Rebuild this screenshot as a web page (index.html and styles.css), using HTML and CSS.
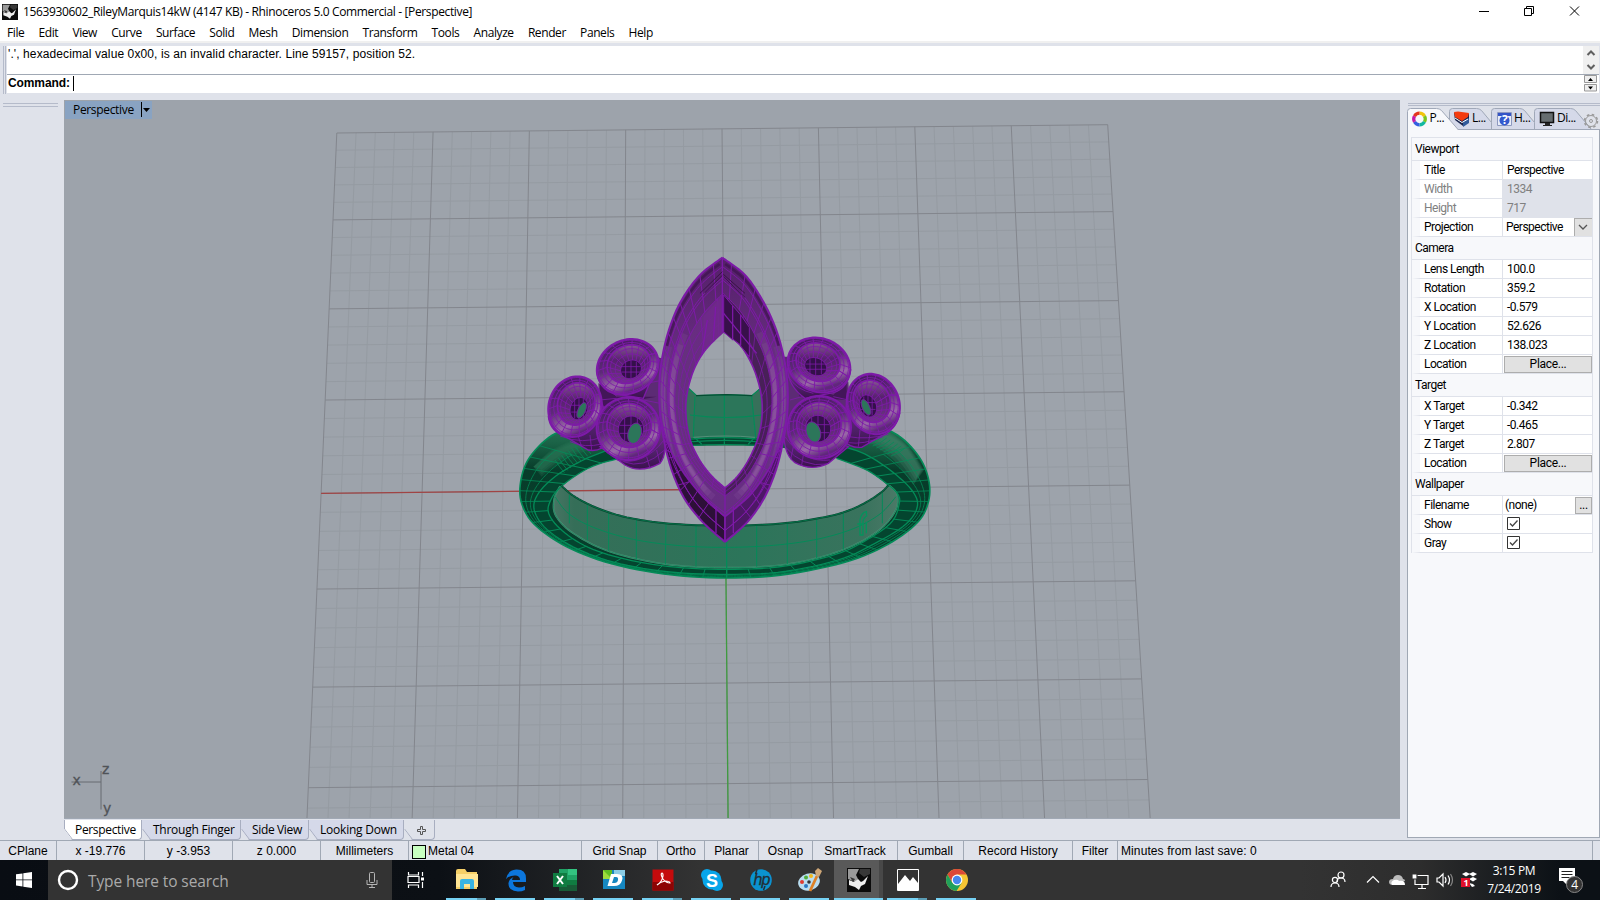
FILE: index.html
```html
<!DOCTYPE html>
<html lang="en">
<head>
<meta charset="utf-8">
<title>Rhinoceros 5.0 Commercial - [Perspective]</title>
<link rel="stylesheet" href="styles.css">
</head>
<body>
<header class="titlebar">
  <svg class="app-icon" width="16" height="16" viewBox="0 0 24 24"><use href="#rhino"/></svg>
  <span class="title-text">1563930602_RileyMarquis14kW (4147 KB) - Rhinoceros 5.0 Commercial - [Perspective]</span>
  <svg class="win-controls" width="110" height="20" viewBox="0 0 110 20" fill="none" stroke="#000" stroke-width="1">
    <path d="M5 9.500h10M50.500 6.500h7v7h-7zM52.500 6.500v-2h7v7h-2M96 4.500l9 9M105 4.500l-9 9"/>
  </svg>
</header>
<nav class="menu"><span>File</span><span>Edit</span><span>View</span><span>Curve</span><span>Surface</span><span>Solid</span><span>Mesh</span><span>Dimension</span><span>Transform</span><span>Tools</span><span>Analyze</span><span>Render</span><span>Panels</span><span>Help</span></nav>

<section class="command">
  <div class="grip-v"></div>
  <div class="command-box">
    <div class="history"><span>'.', hexadecimal value 0x00, is an invalid character. Line 59157, position 52.</span>
      <svg width="16" height="28" viewBox="0 0 16 28" fill="none" stroke="#606060" stroke-width="2"><path d="M4.500 9l3.500-3.500L11.500 9M4.500 19l3.500 3.500L11.500 19"/></svg>
    </div>
    <div class="prompt"><b>Command:</b><i class="caret"></i>
      <svg width="14" height="17" viewBox="0 0 14 17"><path d="M.5 .5h12v7h-12zM.5 9.500h12v6.500h-12z" fill="#eee" stroke="#999"/><path d="M4 6l2.500-3L9 6zM4 11.500h5L6.500 14.500z"/></svg>
    </div>
  </div>
</section>

<main class="work">
  <aside class="left"><div class="grip-h"></div></aside>
  <section class="center">
    <div class="viewport">
      <svg class="scene" id="scene" width="1336" height="718" viewBox="64 100 1336 718">
        <defs>
          <linearGradient id="wall" x1="0" x2="1"><stop offset="0" stop-color="#477563"/><stop offset=".06" stop-color="#356e58"/><stop offset=".55" stop-color="#2c755a"/><stop offset=".9" stop-color="#39735d"/><stop offset="1" stop-color="#4b7967"/></linearGradient>
          <linearGradient id="body" x1="0" y1="0" x2="0" y2="1"><stop offset="0" stop-color="#2d7659"/><stop offset=".13" stop-color="#1a6246"/><stop offset=".3" stop-color="#083c2a"/><stop offset="1" stop-color="#063f2c"/></linearGradient>
          <linearGradient id="marq" x1="0" y1="0" x2="0" y2="1"><stop offset="0" stop-color="#552069"/><stop offset=".45" stop-color="#6c3188"/><stop offset="1" stop-color="#642c80"/></linearGradient>
          <linearGradient id="inl" x1="0" x2="1"><stop offset="0" stop-color="#64337c"/><stop offset="1" stop-color="#6d2588"/></linearGradient>
          <linearGradient id="cyl" x1="0" y1="0" x2="0" y2="1"><stop offset="0" stop-color="#703585"/><stop offset=".6" stop-color="#50216a"/><stop offset="1" stop-color="#3b124e"/></linearGradient>
          <linearGradient id="rim" x1="0" y1="0" x2=".4" y2="1"><stop offset="0" stop-color="#42165a"/><stop offset=".55" stop-color="#5e2a79"/><stop offset=".84" stop-color="#9a68a8"/><stop offset="1" stop-color="#60277c"/></linearGradient>
          <linearGradient id="cup" x1="0" y1="0" x2="0" y2="1"><stop offset="0" stop-color="#855592"/><stop offset=".4" stop-color="#57216f"/><stop offset="1" stop-color="#6f3884"/></linearGradient>
        </defs>
        <g id="grid"></g>
        <g id="model" transform="translate(500 240) scale(.33333)"></g>
        <g class="axes-icon"><path d="M71.500 782h29.500M101 771v38.500"/><text x="72.500" y="785">x</text><text x="102" y="774">z</text><text x="103" y="813">y</text></g>
      </svg>
      <div class="view-label"><span>Perspective</span><svg width="10" height="16" viewBox="0 0 10 16"><path d="M.5 0v15" stroke="#000"/><path d="M2 6h7L5.500 10z"/></svg></div>
    </div>
    <div class="view-tabs">
      <div class="vtab on w1"><svg width="9" height="20"><path d="M.5 0v9l8 10.500"/></svg>Perspective</div>
      <div class="vtab w2"><svg width="9" height="20"><path d="M.5 9l8 10.500"/></svg>Through Finger</div>
      <div class="vtab w3"><svg width="9" height="20"><path d="M.5 9l8 10.500"/></svg>Side View</div>
      <div class="vtab w4"><svg width="9" height="20"><path d="M.5 9l8 10.500"/></svg>Looking Down</div>
      <div class="vtab plus"><svg width="9" height="20"><path d="M.5 9l8 10.500"/></svg><svg class="plus-i" width="10" height="10"><path d="M3.500 .5h2v3h3v2h-3v3h-2v-3h-3v-2h3z"/></svg></div>
    </div>
  </section>
  <aside class="right">
    <div class="grip-h"></div>
    <div class="ptabs">
      <svg width="193" height="22" viewBox="0 0 193 22">
        <path class="pt" d="M127.500 21.500v-18q0-3 3-3h33q3 0 5 2l16 19"/>
        <path class="pt" d="M84.500 21.500v-18q0-3 3-3h25q3 0 5 2l10 12v7z"/>
        <path class="pt" d="M42.500 14v-10.500q0-3 3-3h24q3 0 5 2l10 12v7h-34z"/>
        <path d="M0 21.500h193" stroke="#a0a8b8"/>
        <path class="pt sel" d="M.5 22v-18.500q0-3 3-3h26q3 0 5 2l17 19.500"/>
        <g fill="none" stroke-width="3.200"><path d="M12.500 5.200a5.800 5.800 0 0 1 5 2.900" stroke="#f1c40b"/><path d="M17.500 8.100a5.800 5.800 0 0 1 0 5.800" stroke="#79c51d"/><path d="M17.500 13.900a5.800 5.800 0 0 1-5 2.900" stroke="#12b8a0"/><path d="M12.500 16.800a5.800 5.800 0 0 1-5-2.900" stroke="#345fe0"/><path d="M7.500 13.900a5.800 5.800 0 0 1 0-5.800" stroke="#c31ba8"/><path d="M7.500 8.100a5.800 5.800 0 0 1 5-2.900" stroke="#e5361e"/></g>
        <path d="M47 5l1 7 8 6 6-4V6z" fill="#18234a"/><path d="M56 13l6-3v5l-6 4z" fill="#315a9a"/><path d="M47 4l4-.5L62 5l-1 4-6 4-7-4z" fill="#f43b10"/><path d="M48 10l7 4.500 6-3.500" stroke="#fff" fill="none"/>
        <path d="M90.500 4.500h14v13h-14z" fill="#e8edf8" stroke="#8d98bf"/><path d="M91 5h13v3H91z" fill="#3454c8"/><circle cx="97.500" cy="12.500" r="5" fill="#3359ce"/><text x="95" y="16" font-size="9" font-weight="bold" fill="#fff">?</text>
        <path d="M133.500 4.500h13v10h-13z" fill="#666d70" stroke="#111" stroke-width="1.500"/><path d="M138 15h5v2h2v1h-9v-1h2z" fill="#222"/>
        <g fill="none" stroke="#999"><circle cx="184" cy="13" r="5.500"/><circle cx="184" cy="13" r="1.500"/><circle cx="184" cy="13" r="6.500" stroke-dasharray="2.600 2.500" stroke-width="1.500"/></g>
        <text x="22.500" y="14">P...</text><text x="65" y="14">L...</text><text x="107" y="14">H...</text><text x="150" y="14">Di...</text>
      </svg>
    </div>
    <div class="panel">
      <div class="props">
        <h3>Viewport</h3>
        <div class="row"><label>Title</label><span>Perspective</span></div>
        <div class="row off"><label>Width</label><span>1334</span></div>
        <div class="row off"><label>Height</label><span>717</span></div>
        <div class="row tight"><label>Projection</label><span>Perspective</span><em class="drop"><svg width="10" height="7"><path d="M1 1l4 4 4-4" fill="none" stroke="#555" stroke-width="1.300"/></svg></em></div>
        <h3>Camera</h3>
        <div class="row"><label>Lens Length</label><span>100.0</span></div>
        <div class="row"><label>Rotation</label><span>359.2</span></div>
        <div class="row"><label>X Location</label><span>-0.579</span></div>
        <div class="row"><label>Y Location</label><span>52.626</span></div>
        <div class="row"><label>Z Location</label><span>138.023</span></div>
        <div class="row"><label>Location</label><button>Place...</button></div>
        <h3>Target</h3>
        <div class="row"><label>X Target</label><span>-0.342</span></div>
        <div class="row"><label>Y Target</label><span>-0.465</span></div>
        <div class="row"><label>Z Target</label><span>2.807</span></div>
        <div class="row"><label>Location</label><button>Place...</button></div>
        <h3>Wallpaper</h3>
        <div class="row none"><label>Filename</label><span>(none)</span><button class="dots">...</button></div>
        <div class="row"><label>Show</label><span><svg width="13" height="13"><path d="M.5.5h12v12H.5z" fill="#fff" stroke="#333"/><path d="M3 6.500L5.500 9 10.500 3.500" fill="none" stroke="#444" stroke-width="1.300"/></svg></span></div>
        <div class="row"><label>Gray</label><span><svg width="13" height="13"><path d="M.5.5h12v12H.5z" fill="#fff" stroke="#333"/><path d="M3 6.500L5.500 9 10.500 3.500" fill="none" stroke="#444" stroke-width="1.300"/></svg></span></div>
      </div>
    </div>
  </aside>
</main>

<section class="status"><span>CPlane</span><span>x -19.776</span><span>y -3.953</span><span>z 0.000</span><span>Millimeters</span><span class="layer"><i></i>Metal 04</span><span>Grid Snap</span><span>Ortho</span><span>Planar</span><span>Osnap</span><span>SmartTrack</span><span>Gumball</span><span>Record History</span><span>Filter</span><span class="save">Minutes from last save: 0</span><span class="end"></span></section>

<footer class="taskbar">
  <div class="start"><svg width="16" height="16" fill="#fff"><path d="M0 2.300l6.500-.9v6.100H0zM7.300 1.300L16 0v7.500H7.300zM0 8.300h6.500v6.100L0 13.500zM7.300 8.300H16V16l-8.700-1.300z"/></svg></div>
  <div class="search"><svg width="22" height="22"><circle cx="11" cy="11" r="9" fill="none" stroke="#fff" stroke-width="2.400"/></svg><span>Type here to search</span>
    <svg class="mic" width="12" height="18" fill="none" stroke="#b5b5b5"><rect x="3.500" y="1.500" width="5" height="10" rx="1"/><path d="M1 9v4.500h10V9M6 13.500v3M3 16.500h6"/></svg></div>
  <div class="tview"><svg width="18" height="18" fill="none" stroke="#fff"><path d="M1.500 1v3h10V1M1.500 17v-3h10v3M1 5.500h11v6H1zM15.500 1v4M15.500 11v6" stroke-width="1.200"/><path d="M14 6.500h3v3h-3z" fill="#fff" stroke="none"/></svg></div>
  <div class="apps">
    <div class="app multi"><svg width="24" height="24"><path d="M1 3q0-2 2-2h7l2 3h10v17H1z" fill="#f5cf67"/><path d="M1 6h22v13H1z" fill="#ffe594"/><path d="M5 21v-8q0-2 2-2h10q2 0 2 2v8h-4v-5H9v5z" fill="#39b4e3"/></svg></div>
    <div class="app"><svg width="24" height="24"><path d="M2 11Q4 2 12 1.500q10-.5 10 9V14H9q0 5 6 5.500 3 0 6-1.500v4q-3 1.500-7 1.500Q4 23 4.500 15q.5-4 5-6-1.500 1.500-1.500 3h8q0-4-4-4.500Q6 7 2 11z" fill="#0c76dc"/></svg></div>
    <div class="app multi"><svg width="26" height="24"><path d="M7 1h18v22H7z" fill="#20a366"/><path d="M16 1h9v6h-9z" fill="#33c481"/><path d="M7 12h18v11H7z" fill="#107c41"/><path d="M7 17h18v6H7z" fill="#185c37"/><path d="M1 5h14v14H1z" fill="#107c41"/><path d="M5 8l6 8M11 8l-6 8" stroke="#fff" stroke-width="2"/></svg></div>
    <div class="app"><svg width="24" height="24"><path d="M1 2h22v19H1z" fill="#1687c0"/><path d="M1 2h9v9H1z" fill="#5fbd22"/><path d="M12 2h11v6H12z" fill="#8bcce5"/><path d="M1 2l9 9H1z" fill="#9ddc3c"/><path d="M9 6h6q7 0 5 6.500-1.500 5.500-8 5.500H5.500zM12 9l-2 6h2.500q3 0 3.500-3 .5-3-2-3z" fill="#fff" fill-rule="evenodd"/></svg></div>
    <div class="app multi"><svg width="24" height="24"><path d="M1.500 1.500h21v21h-21z" fill="#c50b0c"/><path d="M1.500 14h21v8.500h-21z" fill="#8d0404"/><path d="M6 17q5-3 6-9 0-3-1-3-2 1 1 6 3 4 7 4 0-2-5-2-5 1-8 4z" fill="none" stroke="#fff" stroke-width="1.200"/></svg></div>
    <div class="app"><svg width="24" height="24" fill="#08a5e9"><circle cx="12" cy="12" r="9.500"/><circle cx="7" cy="7" r="6"/><circle cx="17" cy="17" r="6"/><text x="6" y="18.500" font-size="18" font-weight="bold" fill="#fff">S</text></svg></div>
    <div class="app"><svg width="24" height="24"><circle cx="12" cy="12" r="10.800" fill="#0b93cf"/><text class="hp" x="4.500" y="16.500" font-size="16" fill="#222f36">hp</text><path d="M8 1.500L6.500 6M14.500 22l1.500-4" stroke="#222f36" stroke-width="1.500"/></svg></div>
    <div class="app"><svg width="26" height="24"><ellipse cx="12" cy="14" rx="11" ry="8.500" fill="#b9ddf0" transform="rotate(-15 12 14)"/><circle cx="5" cy="14" r="2" fill="#e03c31"/><circle cx="9" cy="9.500" r="2" fill="#4fae3a"/><circle cx="14" cy="8" r="2" fill="#f2b81c"/><circle cx="9" cy="18" r="2" fill="#2b79c4"/><circle cx="12" cy="14" r="1.800" fill="#333"/><path d="M13 23L20 8" stroke="#dd8126" stroke-width="2.800"/><path d="M19 8l-1-5 3-3 4 3-3 6z" fill="#cfa777"/></svg></div>
    <div class="app multi active"><svg width="24" height="24" viewBox="0 0 24 24"><g id="rhino"><path d="M0 0h24v24H0z" fill="#0b0b0b"/><path d="M1 1h11l-3 6 2 4-3 3-7-3z" fill="#9a9a9a"/><path d="M2 12l5 2 4-3 3 3 2-1 5-5-3 8-4 2-2 4-4-3-6-2z" fill="#eee"/><path d="M3 9l5 2-2 3z" fill="#333"/><path d="M13 1h10v5l-6 3-5-4z" fill="#383838"/></g></svg></div>
    <div class="app multi"><svg width="24" height="24"><path d="M1.500 1.500h21v21h-21z" fill="#333" stroke="#fff"/><path d="M2 16L9 7l5 6 3-4 5 6v7H2z" fill="#fff"/></svg></div>
    <div class="app"><svg width="24" height="24"><circle cx="12" cy="12" r="11" fill="#f6c533"/><path d="M2.500 6.500A11 11 0 0 1 21.500 6.500H12L7.300 14.700z" fill="#dc4838"/><path d="M2.500 6.500A11 11 0 0 0 11.500 23L16.700 14.700 7.300 14.700z" fill="#20a05b"/><circle cx="12" cy="12" r="5.400" fill="#fff"/><circle cx="12" cy="12" r="4.200" fill="#4787ee"/></svg></div>
  </div>
  <div class="tray">
    <svg width="133" height="24" viewBox="0 0 133 24" fill="none" stroke="#fff" stroke-width="1.200">
      <circle cx="13" cy="7" r="3"/><path d="M9 14q0-4 4-4t4 4"/><circle cx="7" cy="12" r="2.600"/><path d="M3 19q0-4 4-4t4 4"/>
      <path d="M39 14.500l6-6 6 6"/>
      <path d="M65 17q-4 0-4-3t4-3q1-4 5-4 4 0 5 4 2 0 2 2z" fill="#bbb" stroke="none"/><path d="M64 17q-2-3 2-5 4-1 5 1 6-1 6 4z" fill="#fff" stroke="none"/>
      <path d="M87 7.500h13v9H87zM94 17v3M90 20.500h8"/><path d="M84 6h5v5h-5z" fill="#fff" stroke="#333"/>
      <path d="M109 10v4h2l4 4V6l-4 4z"/><path d="M117 9q2 3 0 6M120 7.500q3 4.500 0 9"/><path d="M122.500 6q4 6 0 12" stroke="#888"/>
    </svg>
    <svg width="20" height="20"><path d="M1 4l4-2 4 2-4 2.500zM8 4l4-2 4 2-4 2.500zM8 9l4-2 4 2-4 2.500zM8 13l4 1 2 2-3 1z" fill="#fff"/><path d="M0 8h9v9H0z" fill="#e0102a"/><text x="2.500" y="16" font-size="9" font-weight="bold" fill="#fff">1</text></svg>
    <div class="clock"><span>3:15 PM</span><span>7/24/2019</span></div>
    <svg class="notif" width="28" height="28"><path d="M2 2h16v13h-8v4l-4-4H2z" fill="#fff"/><path d="M4.500 5.500h11M4.500 8.500h11M4.500 11.500h8" stroke="#222"/><circle cx="17.500" cy="18.500" r="8" fill="#333" stroke="#888"/><text x="14.200" y="23" font-size="12" fill="#fff">4</text></svg>
  </div>
</footer>
<script src="scene.js"></script>
</body>
</html>
```
FILE: styles.css
```css
* { box-sizing: border-box; }
body { margin: 0; width: 1600px; height: 900px; overflow: hidden; display: flex; flex-direction: column; background: #dfe2ea; color: #000; font: 12px "Open Sans", "Noto Sans", sans-serif; }
svg { display: block; flex: none; }
.titlebar { height: 22px; background: #fff; display: flex; align-items: center; padding: 1px 16px 0 2px; }
.title-text { margin-left: 5px; flex: 1; font-size: 12px; letter-spacing: -.36px; white-space: nowrap; }
.menu { height: 21px; background: #fff; display: flex; gap: 14.2px; padding: 2px 0 0 7px; line-height: 17px; border-bottom: 2px solid #f0f0f0; letter-spacing: -.41px; }
.command { height: 50px; padding: 3px 1px 0 3px; display: flex; gap: 1px; font: 12px "Liberation Sans", Arial, sans-serif; }
.grip-v { width: 3px; height: 48px; border: solid #b5bbca; border-width: 0 1px; }
.command-box { flex: 1; height: 47px; background: #fff; }
.history { height: 29px; border-bottom: 1px solid #a0a8b4; display: flex; justify-content: space-between; padding-left: 1px; letter-spacing: .1px; line-height: 16px; }
.history svg { background: #f0f0f0; }
.prompt { height: 17px; display: flex; align-items: center; padding-left: 1px; }
.prompt b { letter-spacing: -.1px; padding-bottom: 2px; }
.prompt svg { margin-left: auto; margin-right: 1px; }
.caret { width: 1px; height: 15px; background: #000; margin-left: 3px; }
.work { height: 747px; display: flex; }
.left { width: 64px; padding: 10px 6px 0 3px; }
.grip-h { height: 4px; border: solid #b5bbca; border-width: 1px 0; }
.center { width: 1336px; padding-top: 7px; }
.viewport { position: relative; height: 718px; background: #9da3ab; }
.view-label { position: absolute; left: 1px; top: 1px; width: 87px; height: 18px; background: #89a3c2; display: flex; align-items: center; padding-left: 8px; letter-spacing: -.33px; }
.view-label span { padding-bottom: 2px; }
.view-label svg { margin-left: 7px; }
.axes-icon path { stroke: #666a70; fill: none; }
.axes-icon text { font: 14px "DejaVu Sans", sans-serif; fill: #505358; stroke: #505358; stroke-width: .3; }
.view-tabs { height: 22px; display: flex; border-top: 1px solid #a0a8b4; padding-top: 1px; }
.vtab { position: relative; height: 20px; border-right: 1px solid #a8aec0; border-bottom: 1px solid #a8aec0; border-radius: 0 0 4px 0; background: #d5d9e9; padding-left: 11px; line-height: 20px; white-space: nowrap; clip-path: polygon(0 0, 100% 0, 100% 100%, 8px 100%, 0 9px); }
.vtab svg { position: absolute; left: 0; top: 0; fill: none; stroke: #a8aec0; }
.vtab.on { background: #fff; }
.w1 { width: 78px; letter-spacing: -.33px; } .w2 { width: 99px; letter-spacing: -.25px; } .w3 { width: 68px; letter-spacing: -.35px; } .w4 { width: 95px; letter-spacing: -.22px; }
.plus { width: 31px; background: #dfe2ea; }
.vtab .plus-i { left: 13px; top: 6px; stroke: #555; }
.right { width: 200px; padding: 3px 0 0 7px; }
.right .grip-h { height: 3px; margin: 7px 0 2px 1px; }
.ptabs { height: 22px; }
.ptabs text { font-family: "Open Sans", sans-serif; font-size: 12px; letter-spacing: -.5px; }
.pt { fill: #d5d9e9; stroke: #a0a8b8; }
.pt.sel { fill: #f7f8fb; }
.panel { height: 708px; border: solid #a0a8b4; border-width: 0 1px 1px; background: #f7f8fb; padding: 7px 0 0 3px; }
.props { width: 182px; border: 1px solid #dfe2ea; border-bottom: 0; font: 12px Roboto, "Liberation Sans", sans-serif; letter-spacing: -.5px; }
.props h3 { margin: 0; height: 23px; font: inherit; line-height: 22px; padding-left: 3px; border-bottom: 1px solid #dfe2ea; }
.row { height: 19px; display: flex; background: #fff; border-bottom: 1px solid #dfe2ea; border-left: 8px solid #f7f8fb; line-height: 19px; }
.row label { width: 83px; padding-left: 4px; border-right: 1px solid #dfe2ea; }
.row span { flex: 1; padding-left: 4px; }
.row span svg { margin-top: 2px; }
.off { color: #808080; }
.off span { background: #dfe2ea; }
.tight span { padding-left: 3px; }
.none span { padding-left: 2px; }
.drop { width: 18px; background: #e1e1e1; border: solid #adadad; border-width: 1px 0 0 1px; padding: 5px 3px; }
.row button { flex: 1; margin: 1px 0 0 1px; height: 17px; padding: 0; border: 1px solid #adadad; background: #e1e1e1; font: inherit; letter-spacing: -.3px; line-height: 15px; }
.row .dots { flex: none; width: 17px; }
.status { height: 20px; display: grid; grid-template-columns: 57px 88px 88px 88px 88px 173px 76px 47px 54px 54px 85px 66px 109px 45px 475px 7px; border-top: 1px solid #a0a8b4; font: 12px/20px "Liberation Sans", Arial, sans-serif; text-align: center; white-space: nowrap; }
.status span { height: 19px; border-right: 1px solid #a0a8b4; }
.status .end { border: 0; }
.status .layer { display: flex; text-align: left; padding-left: 3px; }
.layer i { width: 14px; height: 14px; border: 1px solid #000; background: #c8ffc0; margin: 4px 2px 0 0; }
.status .save { text-align: left; padding-left: 3px; letter-spacing: .1px; }
.taskbar { height: 40px; display: flex; background: linear-gradient(90deg, #090d13 0, #0c1015 440px, #333 700px, #333 1300px, #2d2d2d 1420px, #0c1116 1560px); color: #fff; }
.start { width: 48px; padding: 12px 16px; }
.search { width: 344px; background: #333; display: flex; align-items: center; padding: 0 14px 0 9px; color: #aaa; font-size: 15.500px; }
.search span { margin-left: 9px; padding-top: 1px; letter-spacing: -.1px; }
.mic { margin-left: auto; }
.tview { width: 50px; padding: 11px 15px; }
.apps { display: flex; }
.app { width: 49px; height: 40px; display: flex; align-items: center; justify-content: center; border: solid transparent; border-width: 0 4px; background: linear-gradient(#76d2f4, #76d2f4) 0 38px / 40px 2px no-repeat content-box; }
.app.multi { background: linear-gradient(90deg, #76d2f4 31px, #5b9db5 31px) 0 38px / 40px 2px no-repeat content-box; }
.app.active { background: linear-gradient(#76d2f4, #76d2f4) 0 38px / 100% 2px no-repeat border-box, linear-gradient(90deg, #595959 45px, #484848 45px) border-box; }
.app text { font-family: "Liberation Sans", Arial, sans-serif; }
.app .hp { font-style: italic; letter-spacing: -1px; stroke: #222f36; stroke-width: .3; }
.tray { margin-left: 347px; display: flex; align-items: center; }
.clock { width: 70px; margin-left: -2px; display: flex; flex-direction: column; text-align: center; font-size: 12px; line-height: 18px; letter-spacing: -.35px; }
.notif { margin-left: 8px; }
```
FILE: scene.js
```js
const NS = 'http://www.w3.org/2000/svg';
const grid = document.getElementById('grid');
const model = document.getElementById('model');

function draw(parent, d, attrs) {
  const p = document.createElementNS(NS, 'path');
  p.setAttribute('d', d);
  for (const k in attrs) p.setAttribute(k, attrs[k]);
  parent.appendChild(p);
}

/* Construction plane: projective map of an 8 x 8 grid. */
function project(u, v) {
  const P = [[336.8, 133], [1107.7, 124.7], [1147.8, 779.5], [308.3, 787.7]];
  const [a, b, c, d] = P;
  const dx1 = b[0] - c[0], dx2 = d[0] - c[0], dx3 = a[0] - b[0] + c[0] - d[0];
  const dy1 = b[1] - c[1], dy2 = d[1] - c[1], dy3 = a[1] - b[1] + c[1] - d[1];
  const det = dx1 * dy2 - dx2 * dy1;
  const g = (dx3 * dy2 - dx2 * dy3) / det, h = (dx1 * dy3 - dx3 * dy1) / det;
  const s = u / 8, t = v / 7, w = g * s + h * t + 1;
  return [((b[0] - a[0] + g * b[0]) * s + (d[0] - a[0] + h * d[0]) * t + a[0]) / w,
          ((b[1] - a[1] + g * b[1]) * s + (d[1] - a[1] + h * d[1]) * t + a[1]) / w];
}
const seg = (u1, v1, u2, v2) => 'M' + project(u1, v1) + 'L' + project(u2, v2);
let minor = '', major = '';
for (let i = 0; i <= 40; i++) {
  const k = i / 5, line = seg(k, 0, k, 8) + seg(0, k, 8, k);
  if (i % 5) minor += line; else major += line;
}
draw(grid, minor, { stroke: '#959ba2', fill: 'none' });
draw(grid, major, { stroke: '#83868d', fill: 'none' });
draw(grid, seg(0, 4, 4, 4), { stroke: '#a04444', 'stroke-width': 1.3 });
draw(grid, seg(4, 4, 4, 8), { stroke: '#3f9b3f', 'stroke-width': 1.3 });

/* Curve helpers (Catmull-Rom). */
function sample(pts, n) {
  const out = [], m = pts.length - 1;
  for (let i = 0; i <= n; i++) {
    const x = i / n * m, k = Math.min(Math.floor(x), m - 1), t = x - k;
    const p0 = pts[Math.max(k - 1, 0)], p1 = pts[k], p2 = pts[k + 1], p3 = pts[Math.min(k + 2, m)];
    out.push([0, 1].map(j => .5 * (2 * p1[j] + (p2[j] - p0[j]) * t + (2 * p0[j] - 5 * p1[j] + 4 * p2[j] - p3[j]) * t * t + (3 * p1[j] - p0[j] - 3 * p2[j] + p3[j]) * t * t * t)));
  }
  return out;
}
const poly = pts => 'M' + pts.map(p => p[0].toFixed(1) + ' ' + p[1].toFixed(1)).join('L');
const mix = (A, B, t) => A.map((p, i) => [p[0] + (B[i][0] - p[0]) * t, p[1] + (B[i][1] - p[1]) * t]);
const band = (A, B) => poly(A.concat(B.slice().reverse())) + 'Z';
function mesh(A, B, levels, ribs, color, w = 3, from = 0, to = 1) {
  let d = levels.map(t => poly(mix(A, B, t))).join('');
  for (let i = 0; i <= ribs; i++) {
    const k = Math.round((from + (to - from) * i / ribs) * (A.length - 1));
    d += 'M' + A[k] + 'L' + B[k];
  }
  draw(model, d, { fill: 'none', stroke: color, 'stroke-width': w });
}
/* Resample a shank curve at even angles so that its ribs run radially. */
function radial(pts, n) {
  const ang = p => {
    const a = Math.atan2((p[1] - 775) * 2.4, 680 - p[0]) * 180 / Math.PI;
    return a < -90 ? a + 360 : a;
  };
  const out = [];
  for (let i = 0; i <= n; i++) {
    const a = -34 + 248 * i / n;
    let k = 0;
    while (k < pts.length - 2 && ang(pts[k + 1]) < a) k++;
    const t = Math.max(0, Math.min(1, (a - ang(pts[k])) / (ang(pts[k + 1]) - ang(pts[k]) || 1)));
    out.push([0, 1].map(j => pts[k][j] + (pts[k + 1][j] - pts[k][j]) * t));
  }
  return out;
}

/* Shank */
const G = '#048b58';
const N = 120;
const outer = sample([[230, 555], [150, 590], [87, 655], [62, 725], [65, 790], [105, 855], [200, 920], [330, 970], [500, 1003], [680, 1014], [860, 1003], [1040, 965], [1160, 915], [1250, 850], [1284, 790], [1287, 725], [1260, 655], [1200, 590], [1120, 550]], N);
const edge = sample([[350, 620], [250, 660], [165, 710], [112, 765], [104, 815], [145, 872], [235, 928], [355, 970], [510, 996], [680, 1003], [850, 995], [1020, 958], [1125, 910], [1215, 855], [1252, 800], [1235, 750], [1170, 690], [1090, 640], [1010, 615]], N);
const rim = sample([[355, 656], [270, 682], [185, 738], [150, 785], [148, 825], [190, 875], [265, 922], [370, 956], [510, 980], [680, 988], [850, 979], [1010, 942], [1105, 897], [1175, 846], [1197, 795], [1195, 765], [1165, 735], [1100, 690], [1010, 655]], N);
const wallLow = sample([[180, 738], [162, 780], [168, 828], [220, 880], [330, 935], [500, 973], [680, 983], [860, 973], [1020, 933], [1130, 876], [1185, 815], [1192, 765], [1168, 736]], N);
const wallTop = sample([[185, 738], [215, 764], [260, 790], [315, 813], [390, 834], [510, 851], [680, 857], [850, 850], [980, 830], [1050, 810], [1105, 783], [1145, 756], [1165, 736]], N);
const holeTop = sample([[185, 738], [260, 685], [355, 655], [500, 626], [580, 618], [680, 615], [770, 617], [900, 630], [1010, 655], [1100, 690], [1165, 736]], N);
const wallMid = sample([[165, 770], [205, 820], [280, 862], [400, 898], [540, 917], [680, 922], [820, 916], [950, 898], [1060, 866], [1140, 822], [1188, 770]], N);
draw(model, poly(outer) + 'Z' + band(wallTop, holeTop), { fill: 'url(#body)', 'fill-rule': 'evenodd' });
for (let i = 0; i < 4; i++) {
  const s = i * 7;
  draw(model, band(sample([[1100 + s, 600 - s / 2], [1180 + s, 660 - s], [1240 + s / 2, 735 - s]], 20), sample([[1150 - s / 2, 565 + s / 2], [1220 - s / 2, 615], [1272 - s / 2, 690]], 20)), { fill: '#3f8167', opacity: .28 });
  draw(model, band(sample([[300, 620 - s], [200, 655 - s], [125, 710 - s]], 20), sample([[230, 595 + s / 2], [155, 630 + s / 2], [100, 680]], 20)), { fill: '#2d7658', opacity: .25 });
}
draw(model, band(edge, rim), { fill: '#04452f' });
draw(model, band(wallTop, wallLow), { fill: 'url(#wall)' });
draw(model, poly(wallLow), { fill: 'none', stroke: '#548c77', 'stroke-width': 5 });
const ro = radial(outer, 240), re = radial(edge, 240), rr = radial(rim, 240);
mesh(ro, re, [.35, .7], 34, G, 2.4);
mesh(re, rr, [], 34, G, 3);
draw(model, poly(rim) + poly(edge), { fill: 'none', stroke: G, 'stroke-width': 4 });
draw(model, poly(wallMid) + 'M208 765V850M262 792V900M326 817V933M409 840V958M498 851L496 973M588 857V980M770 856V980M862 850V972M950 836V955M1030 815V928M1147 757V850', { fill: 'none', stroke: G, 'stroke-width': 3 });
draw(model, poly(wallTop), { fill: 'none', stroke: '#08452f', 'stroke-width': 6 });
draw(model, poly(wallTop) + poly(wallLow), { fill: 'none', stroke: G, 'stroke-width': 2 });
draw(model, poly(outer), { fill: 'none', stroke: G, 'stroke-width': 5 });
draw(model, 'M680 905V1014', { stroke: G, 'stroke-width': 4 });
draw(model, 'M1080 885V840Q1083 818 1099 815L1100 828Q1088 835 1089 850V885ZM1072 852H1090M1099 845V880', { fill: 'none', stroke: '#05935c', 'stroke-width': 4 });
for (let i = 0; i < 9; i++) {
  draw(model, `M${165 + i * 10} ${660 - i * 7}q14 22 28 38M${1085 + i * 11} ${600 + i * 6}q25 -8 42 -24`, { fill: 'none', stroke: G, 'stroke-width': 2.4 });
}

/* Rear gallery seen through the head */
draw(model, 'M550 430L590 467L680 464L755 467L795 430V617H550Z', { fill: '#2c765a' });
draw(model, 'M550 430L590 467L582 590L600 617H560ZM795 430L755 467L765 590L745 617H795Z', { fill: '#37705a' });
draw(model, 'M560 596Q680 588 785 596V618Q680 610 560 618Z', { fill: '#05442f' });
draw(model, 'M555 435L590 467L680 464L755 467L795 435M585 470L580 590L605 612M755 470L767 590L745 612M570 525Q680 540 785 525M673 465V615M560 598Q680 588 785 598M560 606Q680 596 785 606M560 617Q680 610 785 617', { fill: 'none', stroke: G, 'stroke-width': 3.5 });
draw(model, 'M588 467L680 464L757 467', { fill: 'none', stroke: '#064b32', 'stroke-width': 4 });
draw(model, 'M580 592Q680 584 765 592', { fill: 'none', stroke: '#6a9c89', 'stroke-width': 2 });

/* Accent bezels */
const V = '#7d1aa8';
function ellipse(cx, cy, rx, ry, rot) {
  const out = [], r = rot * Math.PI / 180;
  for (let i = 0; i <= 72; i++) {
    const a = i / 72 * Math.PI * 2, x = rx * Math.cos(a), y = ry * Math.sin(a);
    out.push([cx + x * Math.cos(r) - y * Math.sin(r), cy + x * Math.sin(r) + y * Math.cos(r)]);
  }
  return out;
}
function bezel(o, h, green) {
  const A = ellipse(...o), mid = [0, 1].map(i => o[i] + (h[i] - o[i]) * .3 - (i ? 10 : 0));
  const M = ellipse(mid[0], mid[1], o[2] * .7, o[3] * .7, o[4]), H = ellipse(...h);
  draw(model, poly(A) + 'Z', { fill: 'url(#rim)' });
  draw(model, poly(M) + 'Z', { fill: 'url(#cup)' });
  draw(model, poly(H) + 'Z', { fill: '#34104a' });
  mesh(A, M, [.18, .6], 18, V, 2.8);
  mesh(M, H, [.25, .6], 18, V, 2.6);
  draw(model, poly(M), { fill: 'none', stroke: V, 'stroke-width': 5 });
  draw(model, poly(H), { fill: 'none', stroke: V, 'stroke-width': 3 });
  const k = [[-.5, -.85, -.5, .85], [0, -1, 0, 1], [.5, -.85, .5, .85], [-.9, -.3, .9, -.3], [-.9, .3, .9, .3]];
  draw(model, k.map(q => `M${h[0] + q[0] * h[2]} ${h[1] + q[1] * h[3]}L${h[0] + q[2] * h[2]} ${h[1] + q[3] * h[3]}`).join(''), { stroke: V, 'stroke-width': 2.4 });
  if (green) {
    draw(model, poly(ellipse(...green)) + 'Z', { fill: '#2c765a', stroke: V, 'stroke-width': 3 });
  }
  draw(model, poly(A) + 'Z', { fill: 'none', stroke: V, 'stroke-width': 6 });
}
function barrel(d, lines) {
  draw(model, d, { fill: 'url(#cyl)', stroke: V, 'stroke-width': 4 });
  draw(model, lines, { fill: 'none', stroke: V, 'stroke-width': 2.5 });
}
draw(model, 'M295 430L400 455L470 350L500 360V600L400 520L300 520ZM1045 425L940 455L875 350L850 350V600L940 510L1050 510Z', { fill: '#5c2b75' });
draw(model, 'M300 430L350 470L470 470L300 500ZM1040 425L1000 465L880 420L900 470L1040 480Z', { fill: '#431659' });
draw(model, 'M380 470L480 490M440 430L490 420M870 480L960 455M300 480L350 475M1000 470L1045 480', { stroke: V, 'stroke-width': 2.5 });
barrel('M145 530Q150 575 200 592L265 630Q300 638 340 600L300 470Z', 'M180 588Q250 615 310 590M210 605Q255 625 305 612M235 590L245 620M270 585L275 630');
barrel('M1199 520Q1190 570 1140 590L1085 622Q1050 625 1030 600L1040 480Z', 'M1165 583Q1100 600 1045 590M1150 590Q1090 615 1045 608M1110 580L1105 612M1080 570L1075 620');
barrel('M290 390Q295 450 345 462L430 475L478 360Z', 'M310 440L350 468');
barrel('M1052 390Q1045 445 1000 458L915 475Q865 440 862 385Z', 'M865 410Q890 450 940 460');
bezel([383, 380, 95, 80, -25], [393, 388, 32, 27, -25]);
bezel([957, 375, 96, 80, 22], [947, 380, 34, 26, 22]);
barrel('M300 620L375 675Q420 702 480 670Q505 640 490 560Z', 'M350 660Q430 680 492 600M370 665Q430 690 494 630M440 650L450 685M470 630L480 670');
barrel('M1045 620L985 670Q935 695 885 668Q845 640 853 550Z', 'M990 660Q910 670 855 590M980 672Q910 685 855 620M910 645L905 675M880 620L872 658');
bezel([225, 500, 79, 92, 18], [237, 506, 26, 34, 18], [245, 511, 11, 25, 25]);
bezel([1120, 492, 78, 92, -20], [1104, 498, 25, 34, -20], [1098, 502, 11, 25, -25]);
bezel([385, 566, 95, 94, 10], [393, 568, 38, 40, 10], [404, 580, 20, 31, 15]);
bezel([958, 562, 95, 94, -10], [954, 566, 38, 40, -10], [940, 576, 21, 31, -18]);

/* Marquise head */
const mo = {
  l: sample([[667, 53], [600, 105], [545, 180], [510, 260], [488, 345], [478, 430], [480, 515], [492, 600], [515, 690], [553, 775], [608, 846], [675, 906]], N),
  r: sample([[667, 53], [735, 105], [787, 180], [825, 260], [850, 345], [862, 430], [862, 515], [850, 600], [828, 690], [792, 775], [742, 846], [675, 906]], N)
};
const mi = {
  l: sample([[670, 275], [620, 325], [588, 375], [568, 430], [558, 485], [559, 540], [568, 590], [585, 635], [612, 680], [642, 715], [675, 744]], N),
  r: sample([[670, 275], [720, 315], [755, 372], [776, 430], [786, 485], [785, 540], [775, 590], [758, 635], [735, 678], [707, 715], [675, 744]], N)
};
const ledge = {
  l: sample([[669, 160], [610, 222], [568, 290], [540, 365], [526, 440], [526, 520], [540, 590], [562, 645], [600, 700], [636, 740], [675, 768]], N),
  r: sample([[669, 160], [722, 215], [765, 285], [797, 360], [814, 440], [814, 520], [800, 590], [778, 645], [746, 700], [710, 740], [675, 768]], N)
};
const foot = {
  l: sample([[480, 530], [505, 615], [545, 690], [595, 755], [635, 795], [675, 830]], 54),
  r: sample([[862, 530], [840, 615], [805, 690], [755, 760], [712, 800], [675, 830]], 54)
};
for (const s of ['l', 'r']) {
  const left = s === 'l';
  draw(model, band(mo[s], mi[s]), { fill: 'url(#marq)' });
  draw(model, band(ledge[s], mi[s]), { fill: left ? 'url(#inl)' : '#482058' });
  const hl = mix(mo[s], ledge[s], .78);
  for (let i = 0; i < 6; i++) {
    draw(model, poly(hl.slice(26 + i * 5, 112 - i * 3)), { fill: 'none', stroke: '#a070ae', 'stroke-width': 20 - i * 2.5, opacity: .13 });
    draw(model, poly(mix(mo[s], ledge[s], .25).slice(38 + i * 4, 88 - i * 4)), { fill: 'none', stroke: '#a070ae', 'stroke-width': 18 - i * 2.5, opacity: .09 });
  }
  draw(model, poly(mix(mo[s], ledge[s], .12).slice(2, 40)), { fill: 'none', stroke: '#3d134e', 'stroke-width': 8, opacity: .7 });
  draw(model, band(mo[s].slice(66), foot[s]), { fill: left ? '#2d1038' : '#4d1866' });
  mesh(mo[s].slice(66), foot[s], [.45], 4, V, 3);
  mesh(mo[s], ledge[s], [.25, .55, .63, 1], 16, V, 3, .04, .84);
  mesh(ledge[s], mi[s], left ? [.35, .7] : [.5], 10, V, 2.2, .03, .9);
  draw(model, poly(mo[s]), { fill: 'none', stroke: V, 'stroke-width': 6 });
  draw(model, poly(mi[s]), { fill: 'none', stroke: V, 'stroke-width': 5 });
  draw(model, poly(foot[s]), { fill: 'none', stroke: V, 'stroke-width': 5 });
}
draw(model, 'M671 165L698 197V300L671 275ZM698 197L722 225V315L698 297ZM722 225L748 262V350L722 318Z', { fill: '#38104a', stroke: V, 'stroke-width': 3 });
draw(model, 'M669 165L610 230V330L669 280Z', { fill: '#702a8b', opacity: .7 });
draw(model, 'M667 53V275M675 744V906M622 240L605 345M647 200L640 300M671 220L770 340M648 800V880M700 800V880', { fill: 'none', stroke: V, 'stroke-width': 4 });
draw(model, 'M667 95L600 160M670 103L735 160M667 106L615 158M672 112L735 172', { fill: 'none', stroke: '#32103f', 'stroke-width': 2.500 });
```
